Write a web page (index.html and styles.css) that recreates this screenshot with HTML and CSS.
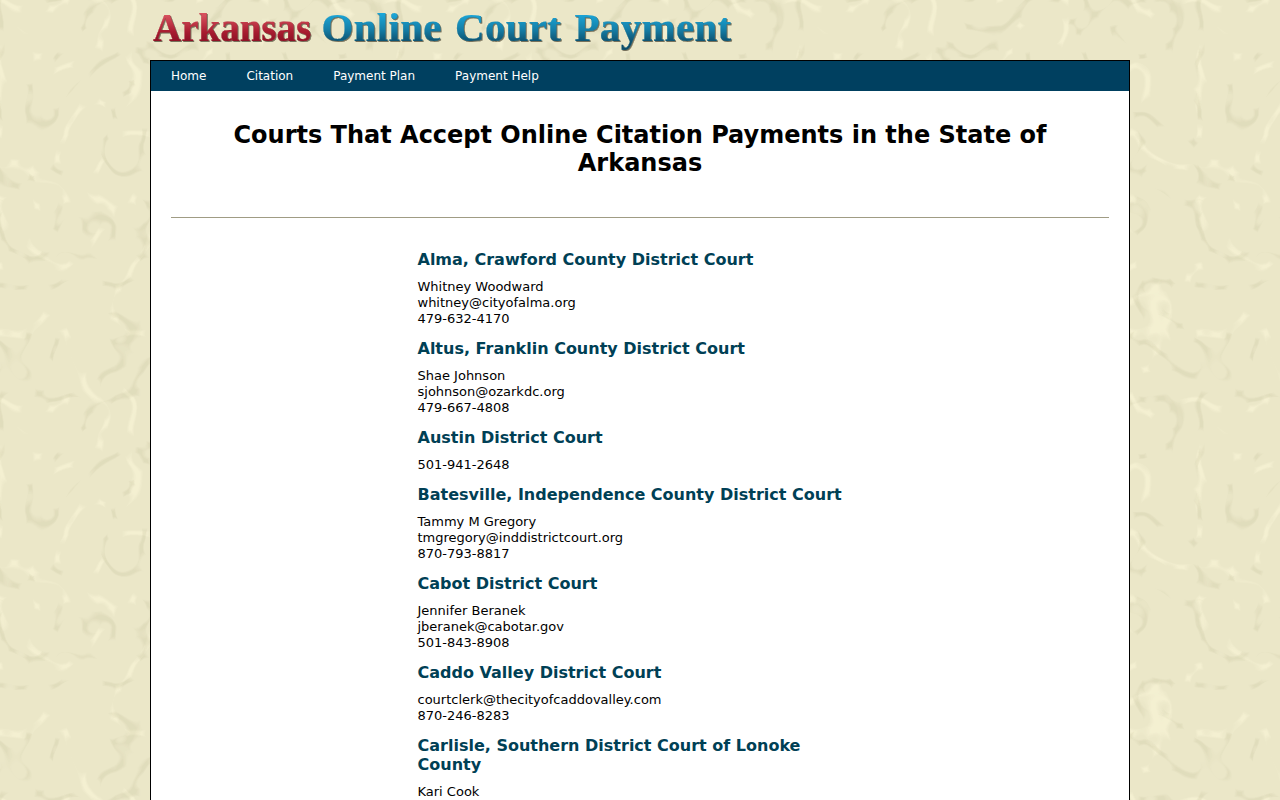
FILE: index.html
```html
<!DOCTYPE html>
<html lang="en">
<head>
<meta charset="utf-8">
<title>Arkansas Online Court Payment</title>
<link rel="stylesheet" href="styles.css">
</head>
<body>
<div class="wrap">
  <header class="logo"><span class="red">Arkansas</span> <span class="blue">Online</span> <span class="blue">Court</span> <span class="blue">Payment</span></header>
  <div class="panel">
    <nav class="nav">
      <a href="#">Home</a>
      <a href="#">Citation</a>
      <a href="#">Payment Plan</a>
      <a href="#">Payment Help</a>
    </nav>
    <main class="content">
      <h1>Courts That Accept Online Citation Payments in the State of Arkansas</h1>
      <hr class="rule">
      <div class="list">
        <h3>Alma, Crawford County District Court</h3>
        <p>Whitney Woodward<br>whitney@cityofalma.org<br>479-632-4170</p>
        <h3>Altus, Franklin County District Court</h3>
        <p>Shae Johnson<br>sjohnson@ozarkdc.org<br>479-667-4808</p>
        <h3>Austin District Court</h3>
        <p>501-941-2648</p>
        <h3>Batesville, Independence County District Court</h3>
        <p>Tammy M Gregory<br>tmgregory@inddistrictcourt.org<br>870-793-8817</p>
        <h3>Cabot District Court</h3>
        <p>Jennifer Beranek<br>jberanek@cabotar.gov<br>501-843-8908</p>
        <h3>Caddo Valley District Court</h3>
        <p>courtclerk@thecityofcaddovalley.com<br>870-246-8283</p>
        <h3>Carlisle, Southern District Court of Lonoke County</h3>
        <p>Kari Cook</p>
      </div>
    </main>
  </div>
</div>
</body>
</html>
```
FILE: styles.css
```css
html, body { margin: 0; padding: 0; }
body {
  height: 800px;
  overflow: hidden;
  background-color: #ebe7c8;
  background-image: url("data:image/svg+xml,%3Csvg xmlns='http://www.w3.org/2000/svg' width='400' height='400'%3E%3Cfilter id='f' x='0' y='0' width='100%25' height='100%25' color-interpolation-filters='sRGB'%3E%3CfeTurbulence type='turbulence' baseFrequency='0.018' numOctaves='2' seed='4' stitchTiles='stitch'/%3E%3CfeColorMatrix values='0 0 0 0 0.66 0 0 0 0 0.64 0 0 0 0 0.48 0 0 0 -16 1.5'/%3E%3C/filter%3E%3Cfilter id='g' x='0' y='0' width='100%25' height='100%25' color-interpolation-filters='sRGB'%3E%3CfeTurbulence type='turbulence' baseFrequency='0.014' numOctaves='2' seed='19' stitchTiles='stitch'/%3E%3CfeColorMatrix values='0 0 0 0 1 0 0 0 0 0.98 0 0 0 0 0.86 0 0 0 -16 1.5'/%3E%3C/filter%3E%3Crect width='400' height='400' filter='url(%23g)' opacity='0.45'/%3E%3Crect width='400' height='400' filter='url(%23f)' opacity='0.16'/%3E%3C/svg%3E");
  font-family: "DejaVu Sans", sans-serif;
  font-size: 13px;
  line-height: 16px;
  color: #000;
}
.wrap { width: 980px; margin: 0 auto; }
.logo {
  height: 60px;
  box-sizing: border-box;
  padding: 3px 0 0 3px;
  font-family: "Liberation Serif", serif;
  font-weight: bold;
  font-size: 41px;
  line-height: 48px;
  white-space: nowrap;
  word-spacing: 3px;
}
.red, .blue {
  background-clip: text;
  -webkit-background-clip: text;
  color: transparent;
  filter: drop-shadow(1px 1px 0.5px #77725c);
}
.red {
  font-size: 39px;
  margin-right: -3px;
  background-image: linear-gradient(#d6505c 22%, #a81c30 60%, #8a1024 85%);
  -webkit-text-stroke: 0.2px #a8243a;
}
.blue {
  letter-spacing: 0.3px;
  background-image: linear-gradient(#1ba6d8 22%, #157fa8 55%, #0d4c68 85%);
  -webkit-text-stroke: 0.2px #14789e;
}
.panel {
  border: 1px solid #000;
  border-bottom: 0;
  background: #fff;
  height: 800px;
}
.nav {
  display: flex;
  height: 30px;
  background: #004060;
  padding: 0 20px;
  gap: 40px;
  font-size: 12px;
  align-items: center;
}
.nav a { color: #fff; text-decoration: none; }
.content { padding: 0 20px; }
h1 {
  margin: 0;
  padding: 30px 40px 40px;
  text-align: center;
  font-size: 24px;
  line-height: 28px;
  font-weight: bold;
}
.rule {
  margin: 0;
  border: 0;
  border-top: 1px solid #a09c84;
}
.list { width: 445px; margin: 32px auto 0; }
h3 {
  margin: 0;
  font-size: 16px;
  line-height: 19px;
  font-weight: bold;
  color: #004055;
}
.list p { margin: 10px 0 12px; }
```
